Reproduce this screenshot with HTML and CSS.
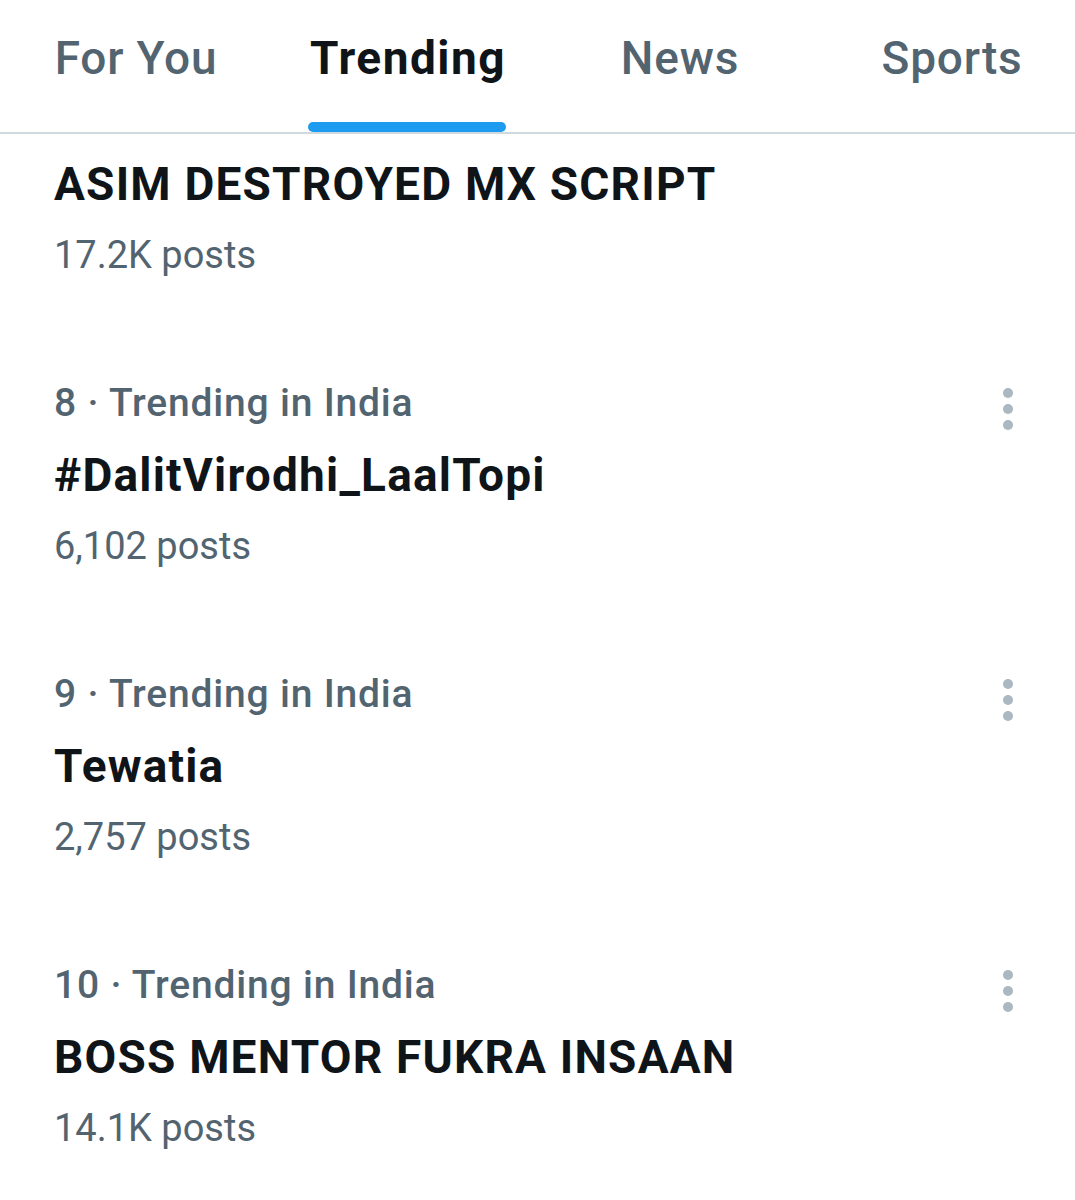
FILE: index.html
```html
<!DOCTYPE html>
<html>
<head>
<meta charset="utf-8">
<link rel="stylesheet" href="styles.css">
</head>
<body>
<div class="page">
  <header class="tabs">
    <div class="tab"><span class="tab-label">For You</span></div>
    <div class="tab active"><span class="tab-label">Trending</span></div>
    <div class="tab"><span class="tab-label">News</span></div>
    <div class="tab"><span class="tab-label">Sports</span></div>
  </header>
  <main class="list">
    <section class="trend first">
      <div class="trend-body">
        <div class="title">ASIM DESTROYED MX SCRIPT</div>
        <div class="posts">17.2K posts</div>
      </div>
    </section>
    <section class="trend">
      <div class="trend-body">
        <div class="meta">8 · Trending in India</div>
        <div class="title">#DalitVirodhi_LaalTopi</div>
        <div class="posts">6,102 posts</div>
      </div>
      <div class="more"><span></span><span></span><span></span></div>
    </section>
    <section class="trend">
      <div class="trend-body">
        <div class="meta">9 · Trending in India</div>
        <div class="title">Tewatia</div>
        <div class="posts">2,757 posts</div>
      </div>
      <div class="more"><span></span><span></span><span></span></div>
    </section>
    <section class="trend">
      <div class="trend-body">
        <div class="meta">10 · Trending in India</div>
        <div class="title">BOSS MENTOR FUKRA INSAAN</div>
        <div class="posts">14.1K posts</div>
      </div>
      <div class="more"><span></span><span></span><span></span></div>
    </section>
  </main>
</div>
</body>
</html>
```
FILE: styles.css
```css
html, body {
  margin: 0;
  padding: 0;
  background: #ffffff;
}
.page {
  width: 1075px;
  height: 1200px;
  overflow: hidden;
  font-family: Roboto, "Liberation Sans", sans-serif;
}
.tabs {
  display: flex;
  height: 132px;
  border-bottom: 2px solid #cfd9de;
  overflow: hidden;
}
.tab {
  flex: 0 0 272px;
  display: flex;
  justify-content: center;
  align-items: stretch;
}
.tab-label {
  position: relative;
  display: flex;
  align-items: flex-start;
  padding-top: 28px;
  font-size: 46px;
  font-weight: 500;
  color: #536471;
  line-height: 60px;
  letter-spacing: 0.8px;
}
.tab.active .tab-label {
  color: #0f1419;
  font-weight: 700;
  letter-spacing: 1.5px;
}
.tab.active .tab-label::after {
  content: "";
  position: absolute;
  left: -2px;
  right: 0;
  bottom: 0;
  height: 10px;
  border-radius: 5px;
  background: #1d9bf0;
}
.list {
  display: flex;
  flex-direction: column;
}
.trend {
  display: flex;
  justify-content: space-between;
  padding: 0 54px 0 54px;
  height: 291px;
}
.trend.first {
  height: 115px;
  margin-bottom: 118px;
}
.trend-body {
  display: flex;
  flex-direction: column;
}
.meta {
  font-size: 39px;
  font-weight: 500;
  color: #536471;
  line-height: 72px;
  letter-spacing: 0.8px;
}
.title {
  font-size: 46px;
  font-weight: 700;
  color: #0f1419;
  line-height: 72px;
  letter-spacing: 1.2px;
}
.posts {
  font-size: 38px;
  font-weight: 400;
  color: #536471;
  line-height: 70px;
  letter-spacing: 0;
}
.trend.first .title {
  margin-top: 14px;
}
.more {
  display: flex;
  flex-direction: column;
  gap: 6px;
  padding-top: 21px;
  margin-right: 8px;
}
.more span {
  width: 10px;
  height: 10px;
  border-radius: 50%;
  background: #aab8c2;
}
```
